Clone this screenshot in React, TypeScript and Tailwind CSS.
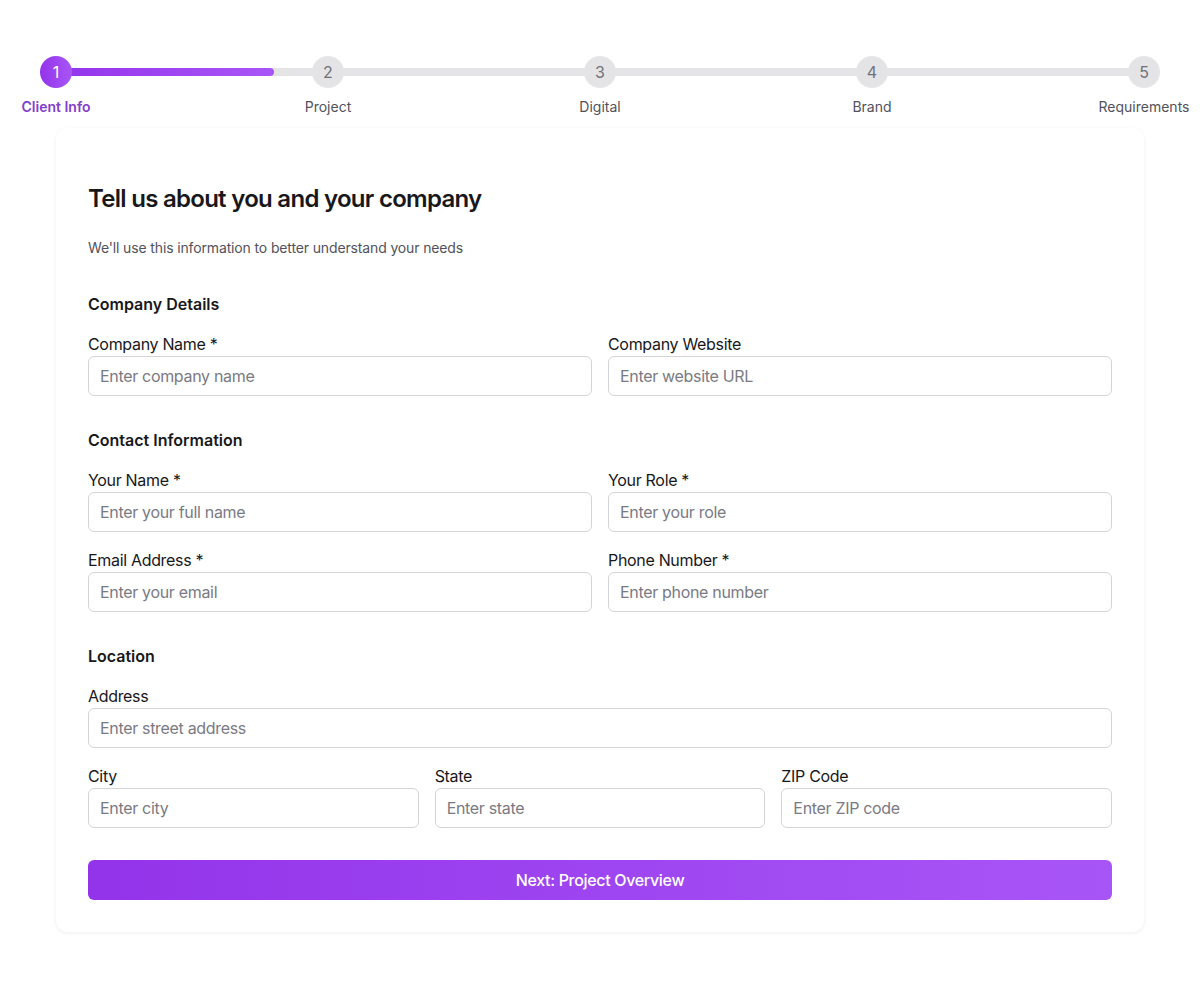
import React from "react";

const steps = ["Client Info", "Project", "Digital", "Brand", "Requirements"];

function Field({ label, placeholder }: { label: string; placeholder: string }) {
  return (
    <div className="flex flex-col">
      <label className="text-base leading-6 tracking-[-0.02em] text-[#18181b]">{label}</label>
      <input
        placeholder={placeholder}
        className="h-10 w-full rounded-md border border-[#d4d4d8] bg-white px-[11px] text-base tracking-[-0.02em] text-[#18181b] outline-none placeholder:text-[#7a7a84]"
      />
    </div>
  );
}

export default function App() {
  return (
    <div
      className="min-h-[1000px] bg-white pt-[56px]"
      style={{ fontFamily: "Inter, 'Noto Sans', sans-serif" }}
    >
      <div className="relative mx-auto w-[1120px]">
        <div className="absolute left-4 right-4 top-[12px] h-2 rounded-full bg-[#e4e4e7]">
          <div className="h-2 w-[20%] rounded-full bg-gradient-to-r from-[#9333ea] to-[#a855f7]" />
        </div>
        <div className="relative flex justify-between">
          {steps.map((s, i) => (
            <div key={s} className="flex w-8 flex-col items-center">
              <div
                className={
                  i === 0
                    ? "flex h-8 w-8 items-center justify-center rounded-full bg-gradient-to-r from-[#9333ea] to-[#a855f7] text-base text-white"
                    : "flex h-8 w-8 items-center justify-center rounded-full bg-[#e4e4e7] text-base text-[#71717a]"
                }
              >
                {i + 1}
              </div>
              <div
                className={
                  i === 0
                    ? "mt-[9px] whitespace-nowrap text-sm font-semibold leading-5 text-[#8340cc]"
                    : "mt-[9px] whitespace-nowrap text-sm leading-5 text-[#52525b]"
                }
              >
                {s}
              </div>
            </div>
          ))}
        </div>
      </div>

      <div className="mx-auto mt-[11px] w-[1088px] rounded-xl bg-white px-8 pb-8 pt-[55px] shadow-[0_1px_4px_rgba(0,0,0,0.07)]">
        <h1 className="text-2xl font-semibold leading-8 tracking-[-0.03em] text-[#18181b]">
          Tell us about you and your company
        </h1>
        <p className="mt-[23px] text-sm leading-5 tracking-[-0.01em] text-[#52525b]">
          We'll use this information to better understand your needs
        </p>

        <h2 className="mt-[34px] text-base font-semibold leading-6 text-[#18181b]">Company Details</h2>
        <div className="mt-4 grid grid-cols-2 gap-4">
          <Field label="Company Name *" placeholder="Enter company name" />
          <Field label="Company Website" placeholder="Enter website URL" />
        </div>

        <h2 className="mt-8 text-base font-semibold leading-6 text-[#18181b]">Contact Information</h2>
        <div className="mt-4 grid grid-cols-2 gap-4">
          <Field label="Your Name *" placeholder="Enter your full name" />
          <Field label="Your Role *" placeholder="Enter your role" />
          <Field label="Email Address *" placeholder="Enter your email" />
          <Field label="Phone Number *" placeholder="Enter phone number" />
        </div>

        <h2 className="mt-8 text-base font-semibold leading-6 text-[#18181b]">Location</h2>
        <div className="mt-4 flex flex-col gap-4">
          <Field label="Address" placeholder="Enter street address" />
          <div className="grid grid-cols-3 gap-4">
            <Field label="City" placeholder="Enter city" />
            <Field label="State" placeholder="Enter state" />
            <Field label="ZIP Code" placeholder="Enter ZIP code" />
          </div>
        </div>

        <button className="mt-8 flex h-10 w-full items-center justify-center rounded-md bg-gradient-to-r from-[#9333ea] to-[#a855f7] text-base font-medium tracking-[-0.02em] text-white">
          Next: Project Overview
        </button>
      </div>
    </div>
  );
}
